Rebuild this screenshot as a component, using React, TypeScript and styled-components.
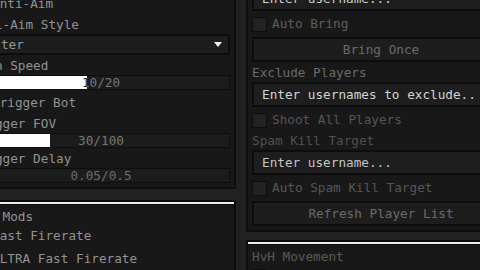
import React from "react";
import styled, { createGlobalStyle, css } from "styled-components";

const Global = createGlobalStyle`
  html, body {
    margin: 0;
    padding: 0;
    background: #212121;
    overflow: hidden;
  }
  body {
    width: 480px;
    height: 270px;
    font-family: "DejaVu Sans Mono", "Liberation Mono", monospace;
    font-size: 12.7px;
  }
  * { box-sizing: border-box; }
`;

const Stage = styled.div`
  display: grid;
  grid-template-columns: 270px 270px;
  column-gap: 10px;
  margin-left: -34px;
  align-items: start;
`;

const Column = styled.div<{ $top: number; $gap: number }>`
  display: flex;
  flex-direction: column;
  gap: ${(p) => p.$gap}px;
  margin-top: ${(p) => p.$top}px;
`;

const Panel = styled.section<{ $accent?: boolean }>`
  display: flex;
  flex-direction: column;
  gap: 3px;
  background: #181818;
  border: 2px solid #0d0d0d;
  padding: 4px;
  ${(p) =>
    p.$accent &&
    css`
      padding-top: 7px;
      box-shadow: inset 0 2px 0 #ececec, inset 0 3px 0 #0d0d0d;
    `}
`;

const Text = styled.div<{ $color: string }>`
  height: 14px;
  line-height: 16px;
  color: ${(p) => p.$color};
  white-space: nowrap;
`;

const ToggleRow = styled.div`
  display: flex;
  align-items: center;
  gap: 5px;
  height: 20px;
`;

const Box = styled.span`
  flex: none;
  width: 15px;
  height: 15px;
  background: #222222;
  border: 1.5px solid #0d0d0d;
`;

const ToggleText = styled.span<{ $color: string }>`
  color: ${(p) => p.$color};
  white-space: nowrap;
  line-height: 14px;
`;

const Dropdown = styled.div`
  display: flex;
  align-items: center;
  justify-content: space-between;
  height: 21px;
  padding: 0 6px 0 4px;
  background: #1d1d1d;
  border: 2px solid #0d0d0d;
  color: #979797;
  white-space: nowrap;
`;

const Caret = styled.span`
  width: 0;
  height: 0;
  border-left: 4.5px solid transparent;
  border-right: 4.5px solid transparent;
  border-top: 5px solid #f0f0f0;
`;

const Track = styled.div`
  position: relative;
  height: 15px;
  background: #1c1c1c;
  border: 1px solid #0d0d0d;
  overflow: hidden;
`;

const Value = styled.div<{ $color: string }>`
  display: flex;
  align-items: center;
  justify-content: center;
  height: 100%;
  color: ${(p) => p.$color};
  white-space: nowrap;
`;

const Fill = styled.div`
  position: absolute;
  left: 0;
  top: 0;
  bottom: 0;
  background: #ffffff;
  overflow: hidden;
`;

const Field = styled.div<{ $color: string }>`
  display: flex;
  align-items: center;
  height: 25px;
  padding: 0 8px 0 8px;
  background: #1e1e1e;
  border: 2px solid #0d0d0d;
  color: ${(p) => p.$color};
  white-space: nowrap;
  overflow: hidden;
`;

const Action = styled.div`
  display: flex;
  align-items: center;
  justify-content: center;
  height: 25px;
  background: #1d1d1d;
  border: 2px solid #0d0d0d;
  color: #6a6a6a;
  white-space: nowrap;
`;

const Toggle = ({ label, color }: { label: string; color: string }) => (
  <ToggleRow>
    <Box />
    <ToggleText $color={color}>{label}</ToggleText>
  </ToggleRow>
);

const Slider = ({
  value,
  min,
  max,
  text,
  color,
}: {
  value: number;
  min: number;
  max: number;
  text: string;
  color: string;
}) => {
  const pct = Math.max(0, Math.min(1, (value - min) / (max - min))) * 100;
  return (
    <Track>
      <Value $color={color}>{text}</Value>
      {pct > 0 && (
        <Fill style={{ width: `${pct}%` }}>
          <Value $color="#1e1e1e" style={{ width: `${(100 / pct) * 100}%` }}>
            {text}
          </Value>
        </Fill>
      )}
    </Track>
  );
};

const MID = "#929292";

export default function App() {
  return (
    <>
      <Global />
      <Stage>
        <Column $top={-12} $gap={11}>
          <Panel>
            <Toggle label="Anti-Aim" color={MID} />
            <Text $color={MID}>Anti-Aim Style</Text>
            <Dropdown>
              <span>Jitter</span>
              <Caret />
            </Dropdown>
            <Text $color={MID}>Spin Speed</Text>
            <Slider value={10} min={2} max={20} text="10/20" color="#767676" />
            <Toggle label="Trigger Bot" color={MID} />
            <Text $color={MID}>Trigger FOV</Text>
            <Slider value={30} min={0} max={100} text="30/100" color="#767676" />
            <Text $color={MID}>Trigger Delay</Text>
            <Slider value={0.05} min={0.05} max={0.5} text="0.05/0.5" color="#6c6c6c" />
          </Panel>
          <Panel $accent>
            <Text $color={MID}>Gun Mods</Text>
            <Toggle label="Fast Firerate" color={MID} />
            <Toggle label="ULTRA Fast Firerate" color={MID} />
            <Toggle label="Infinite Ammo" color={MID} />
          </Panel>
        </Column>
        <Column $top={-20} $gap={8}>
          <Panel>
            <Field $color="#cfcfcf">Enter username...</Field>
            <Toggle label="Auto Bring" color="#5e5e5e" />
            <Action>Bring Once</Action>
            <Text $color="#6a6a6a">Exclude Players</Text>
            <Field $color="#d4d4d4">Enter usernames to exclude..</Field>
            <Toggle label="Shoot All Players" color="#565656" />
            <Text $color="#505050">Spam Kill Target</Text>
            <Field $color="#c4c4c4">Enter username...</Field>
            <Toggle label="Auto Spam Kill Target" color="#565656" />
            <Action>Refresh Player List</Action>
          </Panel>
          <Panel $accent>
            <Text $color="#5a5a5a">HvH Movement</Text>
            <Toggle label="Speed Hack" color="#565656" />
          </Panel>
        </Column>
      </Stage>
    </>
  );
}
